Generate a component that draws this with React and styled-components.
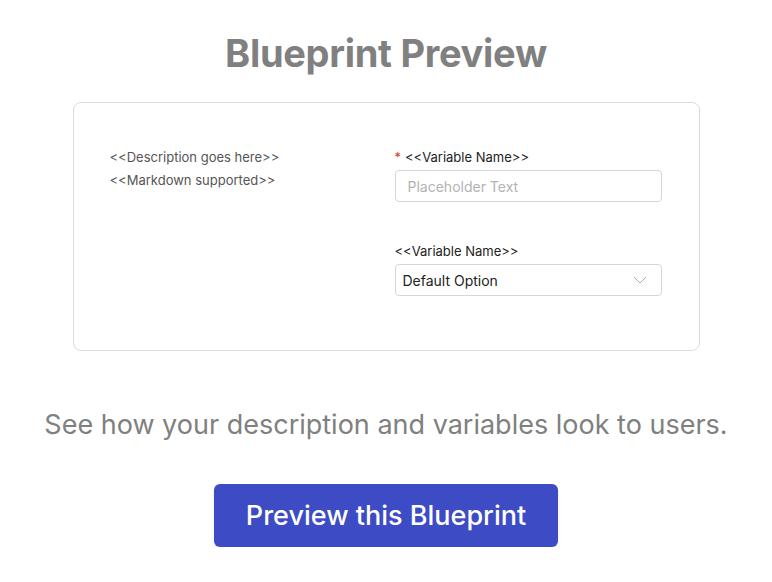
import React from "react";
import styled, { createGlobalStyle } from "styled-components";

const GlobalStyle = createGlobalStyle`
  body {
    margin: 0;
    background: #ffffff;
    font-family: Inter, "Liberation Sans", sans-serif;
  }
`;

const Page = styled.div`
  width: 772px;
  display: flex;
  flex-direction: column;
  align-items: center;
`;

const Title = styled.h1`
  margin: 31px 0 0;
  font-size: 38px;
  line-height: 44px;
  font-weight: 700;
  color: #808080;
  letter-spacing: -0.3px;
`;

const Card = styled.div`
  margin-top: 27px;
  width: 627px;
  height: 249px;
  box-sizing: border-box;
  border: 1px solid #dcdcdc;
  border-radius: 8px;
  display: grid;
  grid-template-columns: 285px 267px;
  align-items: start;
  padding: 43px 0 0 36px;
`;

const Description = styled.div`
  font-size: 13px;
  line-height: 23px;
  color: #555555;
`;

const Fields = styled.div`
  margin-top: 3px;
  display: flex;
  flex-direction: column;
  gap: 41px;
`;

const Field = styled.div`
  display: flex;
  flex-direction: column;
`;

const Label = styled.label`
  font-size: 13px;
  line-height: 16px;
  color: #222222;
  margin-bottom: 5px;
  span {
    color: #e0342b;
    margin-right: 4px;
  }
`;

const Box = styled.div`
  height: 32px;
  box-sizing: border-box;
  border: 1px solid #d6d6d6;
  border-radius: 4px;
  display: flex;
  align-items: center;
  justify-content: space-between;
  padding: ${(p) => (p.$select ? "0 14px 0 7px" : "0 12px")};
  font-size: 14px;
  color: ${(p) => (p.$muted ? "#b3b3b3" : "#222222")};
`;

const Hint = styled.p`
  margin: 58px 0 0;
  font-size: 27px;
  line-height: 32px;
  color: #808080;
`;

const Button = styled.button`
  margin-top: 43px;
  width: 344px;
  height: 63px;
  border: none;
  border-radius: 6px;
  background: #3d4bc4;
  color: #ffffff;
  font-family: Inter, sans-serif;
  font-size: 27px;
  font-weight: 500;
  box-shadow: 0 3px 4px rgba(0, 0, 0, 0.08);
  cursor: pointer;
`;

const Chevron = () => (
  <svg width="14" height="9" viewBox="0 0 14 9" fill="none">
    <path d="M1 1l6 6 6-6" stroke="#ababab" strokeWidth="1" />
  </svg>
);

export default function App() {
  return (
    <>
      <GlobalStyle />
      <Page>
        <Title>Blueprint Preview</Title>
        <Card>
          <Description>
            <div>&lt;&lt;Description goes here&gt;&gt;</div>
            <div>&lt;&lt;Markdown supported&gt;&gt;</div>
          </Description>
          <Fields>
            <Field>
              <Label>
                <span>*</span>&lt;&lt;Variable Name&gt;&gt;
              </Label>
              <Box $muted>Placeholder Text</Box>
            </Field>
            <Field>
              <Label>&lt;&lt;Variable Name&gt;&gt;</Label>
              <Box $select>
                Default Option
                <Chevron />
              </Box>
            </Field>
          </Fields>
        </Card>
        <Hint>See how your description and variables look to users.</Hint>
        <Button>Preview this Blueprint</Button>
      </Page>
    </>
  );
}
